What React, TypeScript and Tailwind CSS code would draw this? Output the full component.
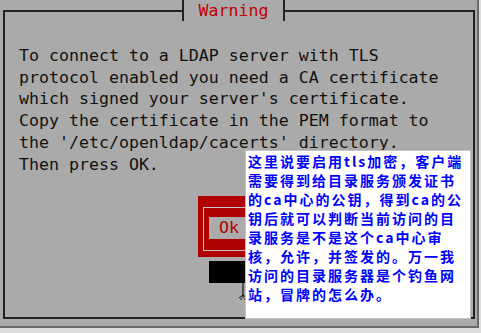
import React from 'react';

const mono = { fontFamily: '"DejaVu Sans Mono", "Liberation Mono", monospace' };
const cjk = { fontFamily: '"Noto Sans CJK SC", "Noto Sans", sans-serif' };

const lines = [
  'To connect to a LDAP server with TLS',
  'protocol enabled you need a CA certificate',
  "which signed your server's certificate.",
  'Copy the certificate in the PEM format to',
  "the '/etc/openldap/cacerts' directory.",
  'Then press OK.',
];

const note = [
  '这里说要启用tls加密，客户端',
  '需要得到给目录服务颁发证书',
  '的ca中心的公钥，得到ca的公',
  '钥后就可以判断当前访问的目',
  '录服务是不是这个ca中心审',
  '核，允许，并签发的。万一我',
  '访问的目录服务器是个钓鱼网',
  '站，冒牌的怎么办。',
];

export default function App() {
  return (
    <div className="w-[481px] h-[333px] bg-[#dcdcdc] overflow-hidden">
      <div className="relative w-[479px] h-[328px] bg-[#aaaaaa] border-r-2 border-b-2 border-[#6a6a6a] pt-[10px] pl-[3px]">
        {/* dialog frame */}
        <div className="w-[472px] h-[309px] border-2 border-[#222]">
          <div className="pl-[14px] pt-[33px] text-[16.6px] leading-[21.7px] text-[#111] whitespace-pre" style={mono}>
            {lines.map((l, i) => (
              <div key={i}>{l}</div>
            ))}
          </div>
          {/* Ok button */}
          <div className="ml-[193px] mt-[21px] w-[84px] h-[61px] bg-[#b00000] pl-[5px] pt-[11px]">
            <div className="w-[74px] h-[44px] border border-[#c6c6c6] pl-[5px] pt-[9px]">
              <div className="w-[60px] h-[22px] bg-[#ababab] pl-[10px] text-[16.6px] leading-[22px] text-[#b00000]" style={mono}>
                Ok
              </div>
            </div>
          </div>
          <div className="ml-[204px] mt-[4px] w-[72px] h-[22px] bg-black" />
        </div>

        {/* title */}
        <div className="absolute left-[182px] top-0 w-[103px] h-[21px] bg-[#aaaaaa] border-l-2 border-r-2 border-[#222] flex justify-center">
          <span className="text-[16.6px] leading-[21px] text-[#c00000]" style={mono}>Warning</span>
        </div>

        {/* mouse text cursor */}
        <svg className="absolute left-[238px] top-[262px]" width="10" height="38" viewBox="0 0 10 38">
          <path d="M2 1 H4 M5 1 V36 M2 37 H4 M6 37 H8" stroke="#111" strokeWidth="1.2" fill="none" />
          <path d="M1 36 L5 33 L9 36" stroke="#111" strokeWidth="1" fill="none" />
        </svg>

        {/* annotation */}
        <div className="absolute left-[245px] top-[150px] w-[226px] h-[169px] bg-white border border-[#c4c4c4] pl-[2px] pt-[1px]">
          {note.map((t, i) => (
            <div key={i} className="text-[14px] leading-[19px] tracking-[2px] font-bold text-[#0000ff] whitespace-nowrap" style={cjk}>
              {t}
            </div>
          ))}
        </div>
      </div>
    </div>
  );
}
